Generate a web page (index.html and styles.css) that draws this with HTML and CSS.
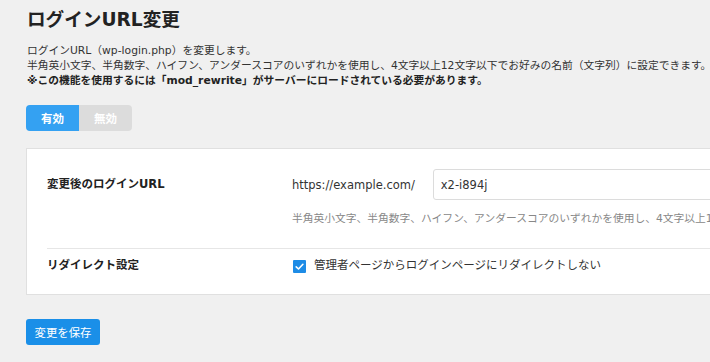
FILE: index.html
```html
<!DOCTYPE html>
<html lang="ja">
<head>
<meta charset="utf-8">
<title>ログインURL変更</title>
<link rel="stylesheet" href="styles.css">
</head>
<body>
<div class="page">
  <h1 class="title">ログインURL変更</h1>
  <div class="desc">
    <p>ログインURL（wp-login.php）を変更します。</p>
    <p>半角英小文字、半角数字、ハイフン、アンダースコアのいずれかを使用し、4文字以上12文字以下でお好みの名前（文字列）に設定できます。</p>
    <p class="strong">※この機能を使用するには「mod_rewrite」がサーバーにロードされている必要があります。</p>
  </div>
  <div class="toggle">
    <span class="tg tg-on">有効</span>
    <span class="tg tg-off">無効</span>
  </div>
  <div class="card">
    <div class="row row-url">
      <div class="label">変更後のログインURL</div>
      <div class="value">
        <div class="url-line">
          <span class="prefix">https://example.com/</span>
          <input class="field" type="text" value="x2-i894j">
        </div>
        <div class="hint">半角英小文字、半角数字、ハイフン、アンダースコアのいずれかを使用し、4文字以上12文字以下でお好みの名前（文字列）に設定できます。</div>
      </div>
    </div>
    <div class="row row-redirect">
      <div class="label">リダイレクト設定</div>
      <div class="value">
        <label class="check">
          <span class="box"><svg viewBox="0 0 13 13" width="13" height="13"><path d="M3.2 6.8 L5.5 9 L9.9 4.3" fill="none" stroke="#fff" stroke-width="1.6" stroke-linecap="round" stroke-linejoin="round"/></svg></span>
          <span class="check-text">管理者ページからログインページにリダイレクトしない</span>
        </label>
      </div>
    </div>
  </div>
  <button class="save">変更を保存</button>
</div>
</body>
</html>
```

FILE: styles.css
```css
html, body {
  margin: 0;
  padding: 0;
  background: #f0f0f0;
  overflow: hidden;
}
body {
  font-family: "DejaVu Sans", "Noto Sans CJK JP", sans-serif;
  color: #222;
}
.page {
  width: 1000px;
  padding: 7px 0 0 26px;
}
.title {
  margin: 0 0 0 1px;
  font-size: 18.6px;
  line-height: 26px;
  font-weight: bold;
  color: #222;
  white-space: nowrap;
}
.desc {
  margin-top: 10px;
  margin-left: 1px;
  font-size: 10.75px;
  line-height: 15px;
  color: #333;
  white-space: nowrap;
}
.desc p {
  margin: 0;
}
.desc .strong {
  font-weight: bold;
  color: #222;
}
.toggle {
  display: flex;
  width: 106px;
  height: 26px;
  margin-top: 17px;
  border-radius: 4px;
  overflow: hidden;
}
.tg {
  flex: 1;
  display: flex;
  align-items: center;
  justify-content: center;
  font-size: 11.5px;
  font-weight: bold;
  color: #fff;
}
.tg-on {
  background: #34a1f2;
}
.tg-off {
  background: #dcdcdc;
}
.card {
  margin-top: 17px;
  background: #fff;
  border: 1px solid #e0e0e0;
  padding: 0 20px;
}
.row {
  display: grid;
  grid-template-columns: 245px 1fr;
}
.row-url {
  padding: 20px 0 22px;
  border-bottom: 1px solid #e6e6e6;
}
.row-redirect {
  padding: 7px 0 20px;
}
.label {
  font-size: 11.5px;
  font-weight: bold;
  color: #222;
  white-space: nowrap;
}
.row-url .label {
  line-height: 31px;
}
.row-redirect .label {
  line-height: 18px;
}
.url-line {
  display: flex;
  align-items: center;
  gap: 18px;
}
.prefix {
  font-size: 11.5px;
  color: #333;
  white-space: nowrap;
}
.field {
  width: 420px;
  height: 31px;
  box-sizing: border-box;
  border: 1px solid #dcdcdc;
  border-radius: 3px;
  padding: 0 7px;
  font-family: "DejaVu Sans", "Noto Sans CJK JP", sans-serif;
  font-size: 11.5px;
  color: #333;
  background: #fff;
}
.hint {
  margin-top: 11px;
  font-size: 10.75px;
  line-height: 15px;
  color: #888;
  white-space: nowrap;
}
.check {
  display: flex;
  align-items: center;
  gap: 8px;
  line-height: 18px;
  margin-left: 1px;
}
.box {
  width: 13px;
  height: 13px;
  background: #1e8ce6;
  border-radius: 1px;
  display: flex;
  margin-top: 2px;
}
.check-text {
  font-size: 11.5px;
  color: #333;
  white-space: nowrap;
}
.save {
  display: block;
  margin-top: 24px;
  width: 74px;
  height: 26px;
  border: none;
  border-radius: 3px;
  background: #1a8fe8;
  color: #fff;
  font-family: "DejaVu Sans", "Noto Sans CJK JP", sans-serif;
  font-size: 11.4px;
  padding: 0;
}
```
